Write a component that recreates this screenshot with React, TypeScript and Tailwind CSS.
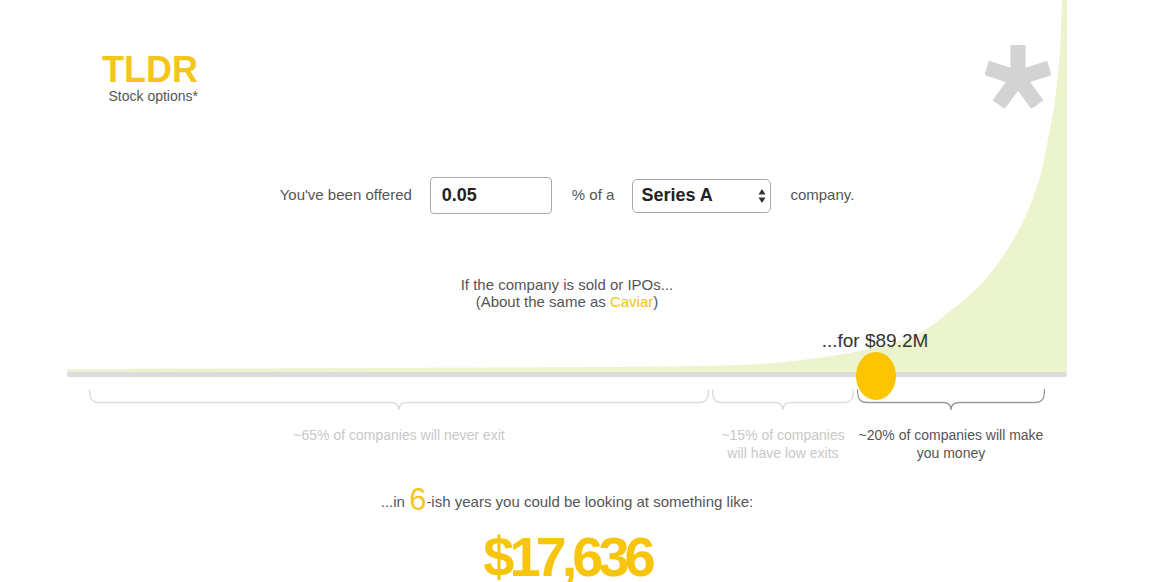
import React from 'react';

// curve outline, in container coords (container starts at x=67)
const CURVE_POINTS: [number, number][] = [
  [0, 369], [333, 368], [533, 367], [633, 366], [693, 364], [743, 359],
  [793, 351], [833, 341], [858, 330], [893, 303], [918, 280], [942, 247],
  [960, 213], [972, 180], [979, 150], [988, 100], [993, 50], [995, 0],
];

function smoothPath(pts: [number, number][]) {
  let d = `M ${pts[0][0]} ${pts[0][1]}`;
  for (let i = 0; i < pts.length - 1; i++) {
    const p0 = pts[i - 1] || pts[i];
    const p1 = pts[i];
    const p2 = pts[i + 1];
    const p3 = pts[i + 2] || p2;
    const c1x = p1[0] + (p2[0] - p0[0]) / 6;
    const c1y = p1[1] + (p2[1] - p0[1]) / 6;
    const c2x = p2[0] - (p3[0] - p1[0]) / 6;
    const c2y = p2[1] - (p3[1] - p1[1]) / 6;
    d += ` C ${c1x} ${c1y}, ${c2x} ${c2y}, ${p2[0]} ${p2[1]}`;
  }
  return d + ' L 1000 0 L 1000 372 L 0 372 Z';
}

const CURVE_D = smoothPath(CURVE_POINTS);

function Brace({ width, color }: { width: number; color: string }) {
  const m = width / 2;
  const d = `M 0.5 0 C 0.5 9, 2 13.5, 10 13.5 L ${m - 8} 13.5 C ${m - 3} 13.5, ${m} 16, ${m} 21 C ${m} 16, ${m + 3} 13.5, ${m + 8} 13.5 L ${width - 10} 13.5 C ${width - 2} 13.5, ${width - 0.5} 9, ${width - 0.5} 0`;
  return (
    <svg width={width} height={22} viewBox={`0 0 ${width} 22`} className="block">
      <path d={d} fill="none" stroke={color} strokeWidth={1.3} />
    </svg>
  );
}

export default function App() {
  return (
    <div className="h-[582px] w-full overflow-hidden bg-white font-['Liberation_Sans',Arial,sans-serif] text-[#555]">
      <div className="relative ml-[67px] w-[1000px] h-[582px]">

        {/* Distribution curve behind the slider */}
        <svg className="absolute left-0 top-0" width={1000} height={372} viewBox="0 0 1000 372">
          <path d={CURVE_D} fill="#ebf4cc" />
        </svg>

        {/* Big grey asterisk */}
        <svg className="absolute left-[918px] top-[44px]" width={66} height={64} viewBox="-33 -34 66 64">
          {[0, 72, 144, 216, 288].map((a) => (
            <rect key={a} x={-7.5} y={-33} width={15} height={33} fill="#d3d3d3" transform={`rotate(${a})`} />
          ))}
          <circle cx={0} cy={0} r={9} fill="#d3d3d3" />
        </svg>

        <div className="relative flex flex-col">

          {/* Logo */}
          <div className="ml-[35px] mt-[52px] flex w-fit flex-col items-end">
            <div className="text-[36px] font-bold leading-[36px] text-[#f5c61a]">TLDR</div>
            <div className="text-[14px] leading-[16px] text-[#555]">Stock options*</div>
          </div>

          {/* Offer sentence */}
          <div className="mt-[73px] flex items-center justify-center text-[15px]">
            <span>You've been offered</span>
            <div className="ml-[18px] flex h-[37px] w-[122px] items-center rounded-[4px] border border-[#aaa] bg-white pl-[11px] text-[18px] font-bold text-[#222]">
              0.05
            </div>
            <span className="ml-[20px]">% of a</span>
            <div className="ml-[18px] flex h-[34px] w-[139px] items-center justify-between rounded-[5px] border border-[#aaa] bg-white pl-[8px] pr-[4px] text-[18px] font-bold text-[#222]">
              <span>Series A</span>
              <svg width={8} height={16} viewBox="0 0 8 16">
                <path d="M4 1 L7.5 6.5 L0.5 6.5 Z" fill="#333" />
                <path d="M4 15 L7.5 9.5 L0.5 9.5 Z" fill="#333" />
              </svg>
            </div>
            <span className="ml-[19px]">company.</span>
          </div>

          {/* Exit copy */}
          <div className="mt-[62px] text-center text-[15px] leading-[17px]">
            <p>If the company is sold or IPOs...</p>
            <p>
              (About the same as <span className="text-[#f1c21b]">Caviar</span>)
            </p>
          </div>

          {/* Slider */}
          <div className="relative h-[62px]">
            <div className="absolute left-[743px] top-[21px] w-[130px] text-center text-[19px] leading-[20px] text-[#333]">
              ...for $89.2M
            </div>
          </div>
          <div className="relative h-[5px] rounded-[2px] bg-[#dcdcdc]">
            <div className="absolute left-[789px] top-[-20px] h-[48px] w-[40px] rounded-[50%] bg-[#fcc500]" />
          </div>

          {/* Brackets */}
          <div className="mt-[12px] grid grid-cols-[620px_142px_188px] gap-x-[3px] pl-[22px] text-center text-[14px] leading-[18px]">
            <div>
              <Brace width={620} color="#dcdcdc" />
              <p className="mt-[15px] text-[#c8c8c8]">~65% of companies will never exit</p>
            </div>
            <div>
              <Brace width={142} color="#dcdcdc" />
              <p className="mt-[15px] text-[#c8c8c8]">~15% of companies<br />will have low exits</p>
            </div>
            <div>
              <Brace width={188} color="#9a9a9a" />
              <p className="mt-[15px] text-[#555]">~20% of companies will make<br />you money</p>
            </div>
          </div>

          {/* Result */}
          <div className="mt-[23px] text-center text-[15px] leading-[30px]">
            ...in <span className="align-[-3px] text-[31px] text-[#f5c61a]">6</span>-ish years you could be looking at something like:
          </div>
          <div className="mt-[18px] text-center text-[56px] font-bold leading-[44px] tracking-[-5px] text-[#f7c60c]">
            $17,636
          </div>
        </div>
      </div>
    </div>
  );
}
